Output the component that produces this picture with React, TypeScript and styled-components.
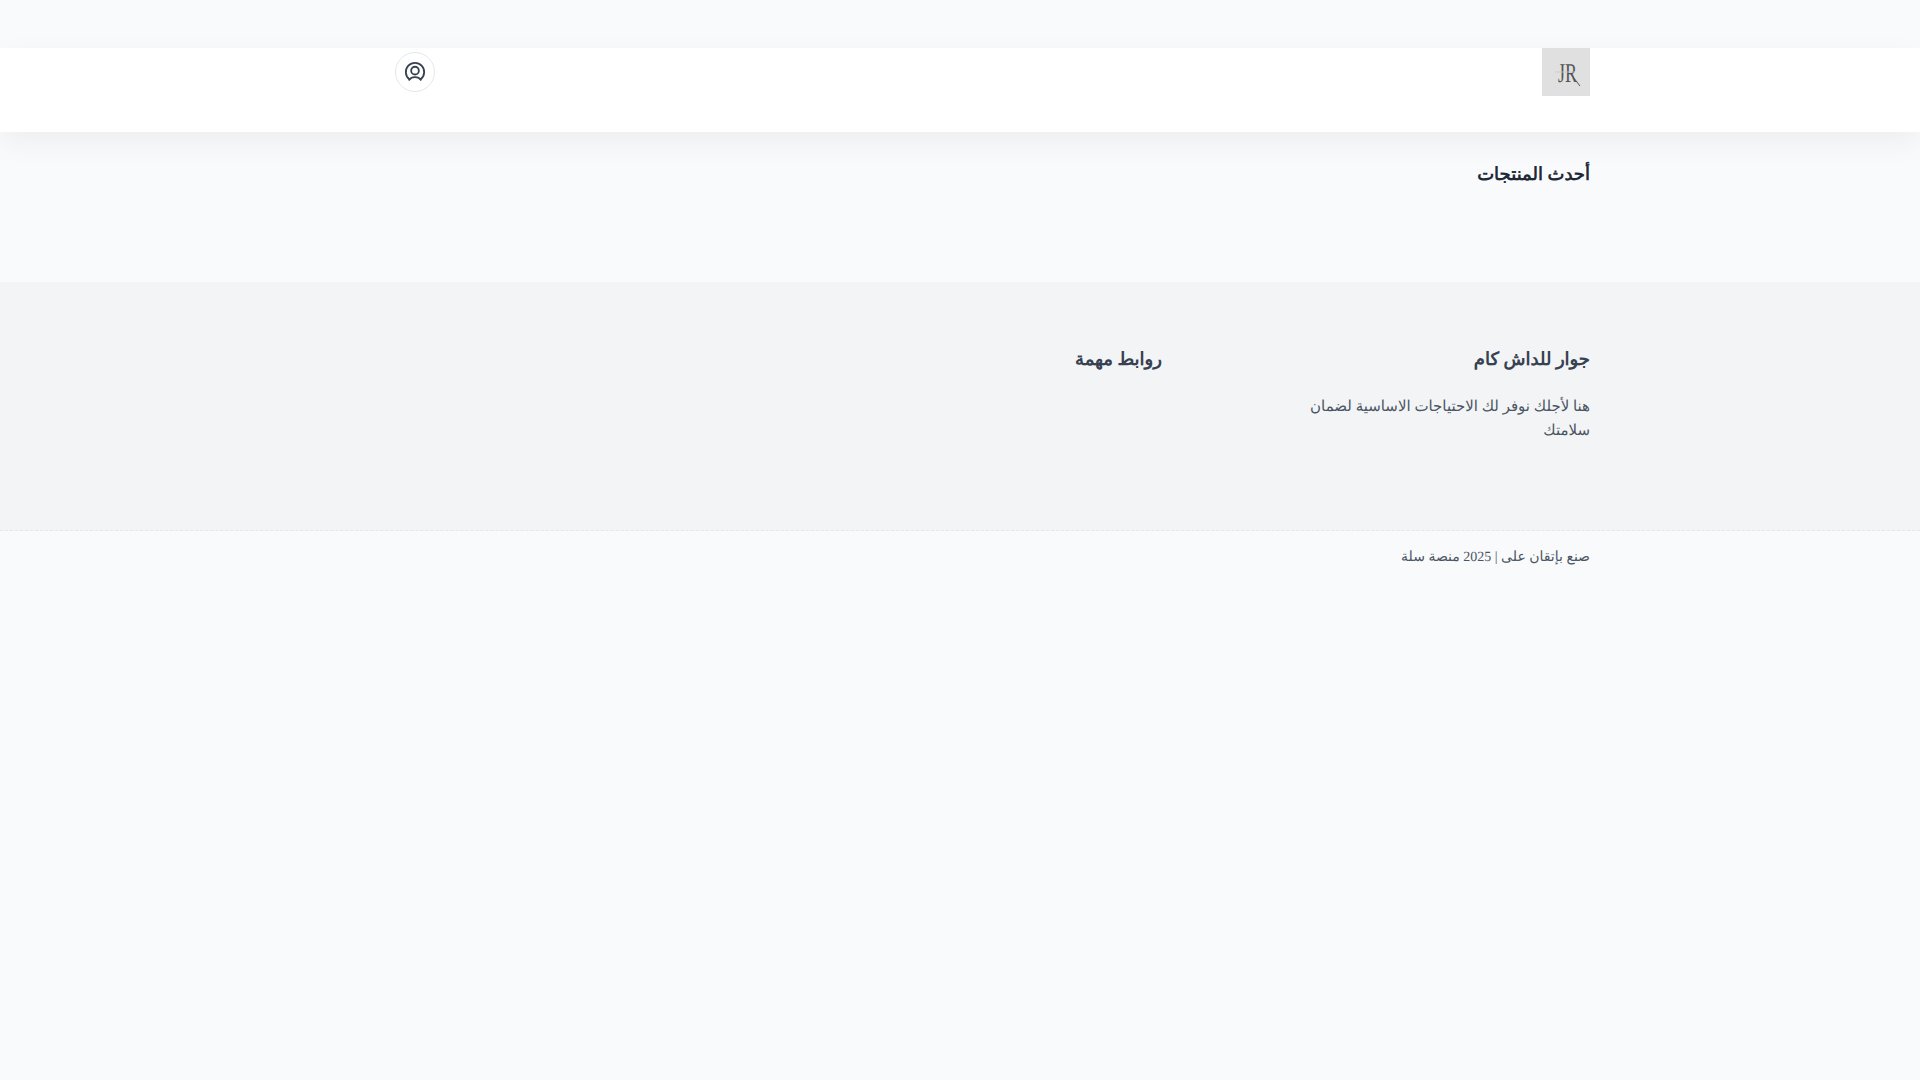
import React from 'react';
import styled, { createGlobalStyle } from 'styled-components';

const GlobalStyle = createGlobalStyle`
  html, body {
    margin: 0;
    min-height: 100%;
    background: #f9fafb;
    font-family: "Liberation Serif", serif;
    text-rendering: geometricPrecision;
  }
`;

export default function App() {
  return (
    <Page dir="rtl">
      <GlobalStyle />
      <TopBar />
      <Header>
        <HeaderInner>
          <Logo aria-label="JR">
            <svg
              width="30"
              height="30"
              viewBox="0 0 30 30"
              fill="none"
              direction="ltr"
              overflow="visible"
            >
              <text
                x="7"
                y="25"
                textLength="19"
                lengthAdjust="spacingAndGlyphs"
                fontFamily="Liberation Serif"
                fontSize="27"
                fill="#555"
                direction="ltr"
              >
                JR
              </text>
              <path d="M19 16l10 13" stroke="#555" strokeWidth="1" />
              <path d="M4 15h20" stroke="#c8c8c8" strokeWidth="0.8" />
            </svg>
          </Logo>
          <UserButton aria-label="user">
            <svg
              width="22"
              height="22"
              viewBox="0 0 24 24"
              fill="none"
              stroke="#374151"
              strokeWidth="2"
              strokeLinecap="round"
            >
              <path d="M5.5 19.6a10 10 0 1 1 13 0" />
              <circle cx="12" cy="10.5" r="4.2" />
              <path d="M5.8 20.6C7 18.5 9.3 17.5 12 17.5s5 1 6.2 3.1" />
            </svg>
          </UserButton>
        </HeaderInner>
      </Header>
      <Products>
        <Container>
          <SectionTitle>أحدث المنتجات</SectionTitle>
        </Container>
      </Products>
      <Footer>
        <FooterColumns>
          <AboutColumn>
            <FooterTitle>جوار للداش كام</FooterTitle>
            <FooterText>
              هنا لأجلك نوفر لك الاحتياجات الاساسية لضمان سلامتك
            </FooterText>
          </AboutColumn>
          <div>
            <FooterTitle>روابط مهمة</FooterTitle>
          </div>
        </FooterColumns>
      </Footer>
      <Copyright>
        <Container>
          <CopyrightText>صنع بإتقان على | 2025 منصة سلة</CopyrightText>
        </Container>
      </Copyright>
    </Page>
  );
}

const Page = styled.div`
  min-height: 1080px;
  background: #f9fafb;
`;

const TopBar = styled.div`
  height: 48px;
`;

const Header = styled.header`
  position: relative;
  height: 84px;
  background: #fff;
  box-shadow: 0 10px 30px rgba(0, 0, 0, 0.05);
`;

const Container = styled.div`
  width: 1260px;
  margin: 0 auto;
`;

const HeaderInner = styled(Container)`
  display: flex;
  justify-content: space-between;
  align-items: flex-start;
  padding-left: 65px;
  box-sizing: border-box;
`;

const Logo = styled.div`
  width: 48px;
  height: 48px;
  display: flex;
  align-items: center;
  justify-content: center;
  background: #e0e0e0;
`;

const UserButton = styled.div`
  width: 40px;
  height: 40px;
  margin-top: 4px;
  box-sizing: border-box;
  display: flex;
  align-items: center;
  justify-content: center;
  background: #fff;
  border: 1px solid #e5e7eb;
  border-radius: 50%;
`;

const Products = styled.section`
  height: 150px;
  padding-top: 28px;
  box-sizing: border-box;
`;

const SectionTitle = styled.h2`
  margin: 0;
  font-size: 18px;
  line-height: 28px;
  font-weight: 700;
  color: #1f2937;
`;

const Footer = styled.footer`
  height: 249px;
  background: #f3f4f6;
  padding-top: 63px;
  box-sizing: border-box;
  border-bottom: 1px dashed #e5e7eb;
`;

const FooterColumns = styled(Container)`
  display: flex;
  gap: 132px;
`;

const AboutColumn = styled.div`
  width: 296px;
`;

const FooterTitle = styled.h3`
  margin: 0 0 22px;
  font-size: 18px;
  line-height: 28px;
  font-weight: 700;
  color: #374151;
`;

const FooterText = styled.p`
  margin: 0;
  font-size: 15px;
  line-height: 24px;
  color: #4b5563;
`;

const Copyright = styled.div`
  padding-top: 15px;
`;

const CopyrightText = styled.p`
  margin: 0;
  font-size: 14px;
  line-height: 24px;
  color: #4b5563;
`;
